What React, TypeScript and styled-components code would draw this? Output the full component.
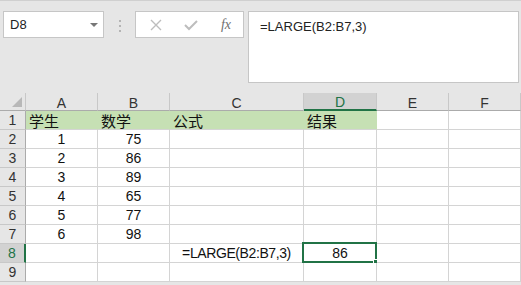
import { Fragment } from 'react';
import styled, { createGlobalStyle } from 'styled-components';

const GlobalStyle = createGlobalStyle`
    html, body {
        margin: 0;
        padding: 0;
        background: #e6e6e6;
        font-family: "Liberation Sans", "Noto Sans CJK SC", sans-serif;
    }
`;

const COLS = [26, 72, 72, 134, 73, 72, 72];
const LETTERS = ['A', 'B', 'C', 'D', 'E', 'F'];

type Align = 'left' | 'center' | 'right';

interface CellData {
    text: string;
    align?: Align;
}

const rows: CellData[][] = [
    [{ text: '学生', align: 'left' }, { text: '数学', align: 'left' }, { text: '公式', align: 'left' }, { text: '结果', align: 'left' }, { text: '' }, { text: '' }],
    [{ text: '1' }, { text: '75' }, { text: '' }, { text: '' }, { text: '' }, { text: '' }],
    [{ text: '2' }, { text: '86' }, { text: '' }, { text: '' }, { text: '' }, { text: '' }],
    [{ text: '3' }, { text: '89' }, { text: '' }, { text: '' }, { text: '' }, { text: '' }],
    [{ text: '4' }, { text: '65' }, { text: '' }, { text: '' }, { text: '' }, { text: '' }],
    [{ text: '5' }, { text: '77' }, { text: '' }, { text: '' }, { text: '' }, { text: '' }],
    [{ text: '6' }, { text: '98' }, { text: '' }, { text: '' }, { text: '' }, { text: '' }],
    [{ text: '' }, { text: '' }, { text: '=LARGE(B2:B7,3)' }, { text: '86' }, { text: '' }, { text: '' }],
    [{ text: '' }, { text: '' }, { text: '' }, { text: '' }, { text: '' }, { text: '' }],
];

const Page = styled.div`
    width: 521px;
    height: 285px;
    overflow: hidden;
    border-top: 1px solid #d0d0d0;
    box-sizing: border-box;
`;

const FormulaBar = styled.div`
    display: flex;
    align-items: flex-start;
    padding: 10px 2px 0 3px;
    height: 82px;
    box-sizing: border-box;
`;

const NameBox = styled.div`
    position: relative;
    width: 101px;
    height: 27px;
    box-sizing: border-box;
    background: #fff;
    border: 1px solid #c6c6c6;
    font-size: 13px;
    color: #222;
    padding: 5px 0 0 6px;
`;

const DropArrow = styled.span`
    position: absolute;
    right: 5px;
    top: 11px;
    width: 0;
    height: 0;
    border-left: 4px solid transparent;
    border-right: 4px solid transparent;
    border-top: 4px solid #777;
`;

const Grip = styled.div`
    display: flex;
    flex-direction: column;
    gap: 3px;
    margin: 9px 14px 0 15px;
`;

const GripDot = styled.span`
    width: 2px;
    height: 2px;
    background: #b4b4b4;
`;

const ButtonBox = styled.div`
    display: flex;
    align-items: center;
    justify-content: space-between;
    width: 109px;
    height: 27px;
    box-sizing: border-box;
    background: #fff;
    border: 1px solid #c6c6c6;
    padding: 0 12px 0 14px;
`;

const FxLabel = styled.span`
    font-family: "Liberation Serif", serif;
    font-style: italic;
    font-size: 14px;
    color: #707070;
`;

const FormulaInput = styled.div`
    flex: 1;
    height: 72px;
    margin-left: 4px;
    box-sizing: border-box;
    background: #fff;
    border: 1px solid #c6c6c6;
    font-size: 13px;
    color: #222;
    padding: 7px 0 0 11px;
`;

const Sheet = styled.div`
    margin-top: 10px;
    display: grid;
    grid-template-columns: ${COLS.map((c) => `${c}px`).join(' ')};
    grid-template-rows: 18px repeat(9, 19px);
    background: #fff;
`;

const Corner = styled.div`
    position: relative;
    background: #e6e6e6;
    border-right: 1px solid #c8c8c8;
    border-bottom: 1px solid #ababab;
    &::after {
        content: '';
        position: absolute;
        right: 3px;
        bottom: 3px;
        border-left: 10px solid transparent;
        border-bottom: 10px solid #b8b8b8;
    }
`;

const ColHead = styled.div<{ $active?: boolean }>`
    display: flex;
    align-items: center;
    justify-content: center;
    font-size: 14px;
    padding-top: 2px;
    box-sizing: border-box;
    color: ${(p) => (p.$active ? '#217346' : '#333')};
    background: ${(p) => (p.$active ? '#d2d2d2' : '#e6e6e6')};
    border-right: 1px solid #c8c8c8;
    border-bottom: ${(p) => (p.$active ? '2px solid #217346' : '1px solid #ababab')};
`;

const RowHead = styled.div<{ $active?: boolean }>`
    display: flex;
    align-items: center;
    justify-content: center;
    font-size: 14px;
    color: ${(p) => (p.$active ? '#217346' : '#333')};
    background: ${(p) => (p.$active ? '#d2d2d2' : '#e6e6e6')};
    border-bottom: 1px solid #c8c8c8;
    border-right: ${(p) => (p.$active ? '2px solid #217346' : '1px solid #ababab')};
    box-sizing: border-box;
`;

const Cell = styled.div<{ $align: Align; $fill?: boolean; $cjk?: boolean; $tight?: boolean }>`
    position: relative;
    display: flex;
    align-items: center;
    justify-content: ${(p) => (p.$align === 'left' ? 'flex-start' : p.$align === 'right' ? 'flex-end' : 'center')};
    padding: 0 3px;
    box-sizing: border-box;
    background: ${(p) => (p.$fill ? '#c6e0b4' : '#fff')};
    border-right: 1px solid ${(p) => (p.$fill ? '#c6e0b4' : '#d4d4d4')};
    border-bottom: 1px solid #d4d4d4;
    font-size: ${(p) => (p.$cjk ? '15px' : '14px')};
    letter-spacing: ${(p) => (p.$tight ? '-0.4px' : 'normal')};
    color: #111;
    white-space: nowrap;
`;

const Selection = styled.div`
    position: absolute;
    left: -2px;
    top: -2px;
    right: -1px;
    bottom: -1px;
    border: 2px solid #217346;
    pointer-events: none;
`;

const FillHandle = styled.div`
    position: absolute;
    right: -5px;
    bottom: -5px;
    width: 5px;
    height: 5px;
    background: #217346;
    border: 1px solid #fff;
`;

function CrossIcon() {
    return (
        <svg width="12" height="12" viewBox="0 0 12 12">
            <path d="M1 1 L11 11 M11 1 L1 11" stroke="#bdbdbd" strokeWidth="1.4" fill="none" />
        </svg>
    );
}

function CheckIcon() {
    return (
        <svg width="14" height="12" viewBox="0 0 14 12">
            <path d="M1 6 L5 10 L13 2" stroke="#bdbdbd" strokeWidth="2" fill="none" />
        </svg>
    );
}

function App() {
    return (
        <Page>
            <GlobalStyle />
            <FormulaBar>
                <NameBox>
                    D8
                    <DropArrow />
                </NameBox>
                <Grip>
                    <GripDot />
                    <GripDot />
                    <GripDot />
                </Grip>
                <ButtonBox>
                    <CrossIcon />
                    <CheckIcon />
                    <FxLabel>fx</FxLabel>
                </ButtonBox>
                <FormulaInput>=LARGE(B2:B7,3)</FormulaInput>
            </FormulaBar>
            <Sheet>
                <Corner />
                {LETTERS.map((l) => (
                    <ColHead key={l} $active={l === 'D'}>
                        {l}
                    </ColHead>
                ))}
                {rows.map((row, r) => (
                    <Fragment key={r}>
                        <RowHead $active={r === 7}>{r + 1}</RowHead>
                        {row.map((cell, c) => {
                            const fill = r === 0 && c < 4;
                            const selected = r === 7 && c === 3;
                            return (
                                <Cell
                                    key={c}
                                    $align={cell.align ?? 'center'}
                                    $fill={fill}
                                    $cjk={r === 0}
                                    $tight={cell.text.length > 8}
                                >
                                    {cell.text}
                                    {selected && (
                                        <Selection>
                                            <FillHandle />
                                        </Selection>
                                    )}
                                </Cell>
                            );
                        })}
                    </Fragment>
                ))}
            </Sheet>
        </Page>
    );
}

export default App;
